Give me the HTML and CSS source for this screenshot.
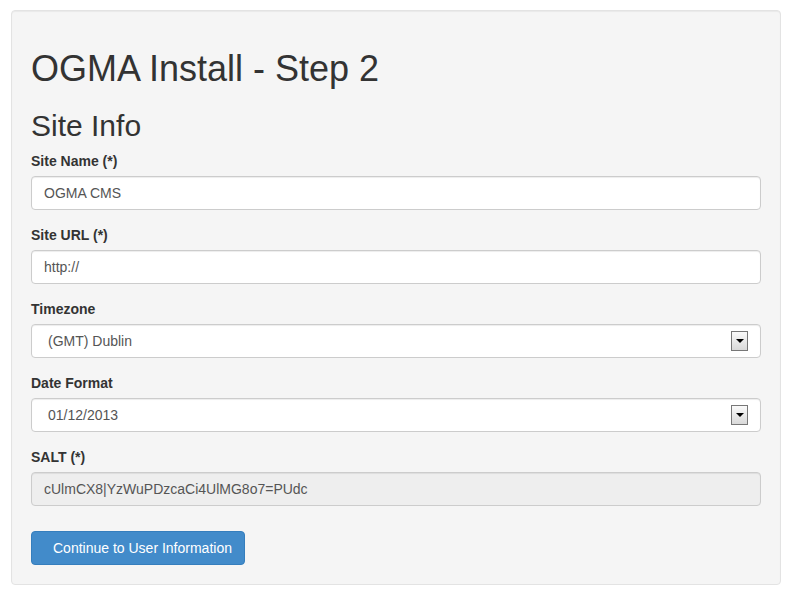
FILE: index.html
```html
<!DOCTYPE html>
<html>
<head>
<meta charset="utf-8">
<title>OGMA Install - Step 2</title>
<link rel="stylesheet" href="styles.css">
</head>
<body>
<div class="well">
  <h1 class="title">OGMA Install - Step 2</h1>
  <h2 class="subtitle">Site Info</h2>
  <form class="form">
    <div class="form-group">
      <label class="label">Site Name (*)</label>
      <div class="control">OGMA CMS</div>
    </div>
    <div class="form-group">
      <label class="label">Site URL (*)</label>
      <div class="control">http://</div>
    </div>
    <div class="form-group">
      <label class="label">Timezone</label>
      <div class="control select">
        <span class="select-text">(GMT) Dublin</span>
        <span class="arrow"><span class="tri"></span></span>
      </div>
    </div>
    <div class="form-group">
      <label class="label">Date Format</label>
      <div class="control select">
        <span class="select-text">01/12/2013</span>
        <span class="arrow"><span class="tri"></span></span>
      </div>
    </div>
    <div class="form-group">
      <label class="label">SALT (*)</label>
      <div class="control readonly">cUlmCX8|YzWuPDzcaCi4UlMG8o7=PUdc</div>
    </div>
    <div class="actions">
      <span class="btn">Continue to User Information</span>
    </div>
  </form>
</div>
</body>
</html>
```
FILE: styles.css
```css
* { box-sizing: border-box; }
html, body { margin: 0; padding: 0; background: #fff; }
body {
  font-family: "Liberation Sans", Arial, Helvetica, sans-serif;
  font-size: 14px;
  line-height: 20px;
  color: #333;
}
.well {
  margin: 10px 14px 0 11px;
  width: 770px;
  padding: 19px;
  background: #f5f5f5;
  border: 1px solid #e3e3e3;
  border-radius: 4px;
  box-shadow: inset 0 1px 1px rgba(0,0,0,0.05);
}
.title {
  margin: 19px 0 10px;
  font-size: 36px;
  line-height: 1.1;
  font-weight: 500;
  color: #333;
}
.subtitle {
  margin: 20px 0 9px;
  font-size: 30px;
  line-height: 1.1;
  font-weight: 500;
  color: #333;
}
.form { margin: 0; }
.form-group { margin-bottom: 15px; }
.label {
  display: inline-block;
  margin-bottom: 5px;
  font-weight: bold;
  color: #333;
}
.control {
  display: flex;
  align-items: center;
  height: 34px;
  padding: 6px 12px;
  font-size: 14px;
  color: #555;
  background: #fff;
  border: 1px solid #ccc;
  border-radius: 4px;
  box-shadow: inset 0 1px 1px rgba(0,0,0,0.075);
}
.readonly { background: #eee; }
.select {
  justify-content: space-between;
  padding: 6px 12px 6px 16px;
}
.arrow {
  display: flex;
  align-items: center;
  justify-content: center;
  width: 17px;
  height: 20px;
  border: 1px solid #777;
  background: linear-gradient(#fafafa, #d9d9d9);
}
.tri {
  width: 0;
  height: 0;
  border-left: 4px solid transparent;
  border-right: 4px solid transparent;
  border-top: 4px solid #000;
  margin-top: 1px;
}
.actions { padding-top: 10px; }
.btn {
  display: inline-block;
  height: 34px;
  padding: 6px 12px 6px 21px;
  width: 214px;
  font-size: 14px;
  line-height: 20px;
  color: #fff;
  background: #428bca;
  border: 1px solid #357ebd;
  border-radius: 4px;
  white-space: nowrap;
}
```
